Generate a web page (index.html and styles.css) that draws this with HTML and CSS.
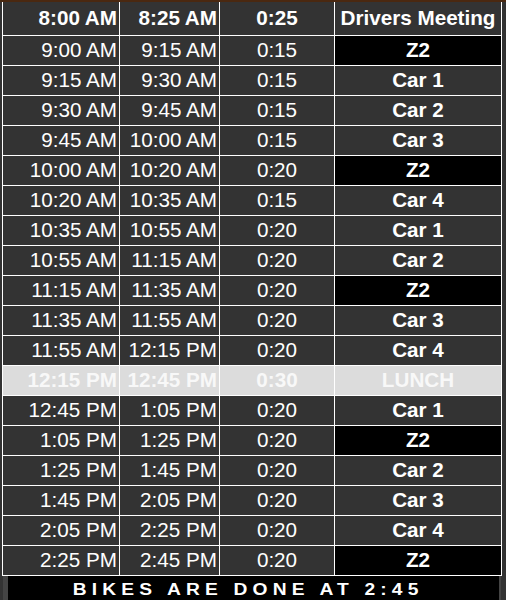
FILE: index.html
```html
<!DOCTYPE html>
<html>
<head>
<meta charset="utf-8">
<link rel="stylesheet" href="styles.css">
</head>
<body>
<div class="topbar"></div>
<div class="schedule">
  <div class="c t b">8:00 AM</div><div class="c t b">8:25 AM</div><div class="c d b">0:25</div><div class="c e">Drivers Meeting</div>
  <div class="c t">9:00 AM</div><div class="c t">9:15 AM</div><div class="c d">0:15</div><div class="c e z">Z2</div>
  <div class="c t">9:15 AM</div><div class="c t">9:30 AM</div><div class="c d">0:15</div><div class="c e">Car 1</div>
  <div class="c t">9:30 AM</div><div class="c t">9:45 AM</div><div class="c d">0:15</div><div class="c e">Car 2</div>
  <div class="c t">9:45 AM</div><div class="c t">10:00 AM</div><div class="c d">0:15</div><div class="c e">Car 3</div>
  <div class="c t">10:00 AM</div><div class="c t">10:20 AM</div><div class="c d">0:20</div><div class="c e z">Z2</div>
  <div class="c t">10:20 AM</div><div class="c t">10:35 AM</div><div class="c d">0:15</div><div class="c e">Car 4</div>
  <div class="c t">10:35 AM</div><div class="c t">10:55 AM</div><div class="c d">0:20</div><div class="c e">Car 1</div>
  <div class="c t">10:55 AM</div><div class="c t">11:15 AM</div><div class="c d">0:20</div><div class="c e">Car 2</div>
  <div class="c t">11:15 AM</div><div class="c t">11:35 AM</div><div class="c d">0:20</div><div class="c e z">Z2</div>
  <div class="c t">11:35 AM</div><div class="c t">11:55 AM</div><div class="c d">0:20</div><div class="c e">Car 3</div>
  <div class="c t">11:55 AM</div><div class="c t">12:15 PM</div><div class="c d">0:20</div><div class="c e">Car 4</div>
  <div class="c t b l">12:15 PM</div><div class="c t b l">12:45 PM</div><div class="c d b l">0:30</div><div class="c e l">LUNCH</div>
  <div class="c t">12:45 PM</div><div class="c t">1:05 PM</div><div class="c d">0:20</div><div class="c e">Car 1</div>
  <div class="c t">1:05 PM</div><div class="c t">1:25 PM</div><div class="c d">0:20</div><div class="c e z">Z2</div>
  <div class="c t">1:25 PM</div><div class="c t">1:45 PM</div><div class="c d">0:20</div><div class="c e">Car 2</div>
  <div class="c t">1:45 PM</div><div class="c t">2:05 PM</div><div class="c d">0:20</div><div class="c e">Car 3</div>
  <div class="c t">2:05 PM</div><div class="c t">2:25 PM</div><div class="c d">0:20</div><div class="c e">Car 4</div>
  <div class="c t">2:25 PM</div><div class="c t">2:45 PM</div><div class="c d">0:20</div><div class="c e z">Z2</div>
</div>
<div class="footer"><span class="footer-text">BIKES ARE DONE AT 2:45</span></div>
</body>
</html>
```
FILE: styles.css
```css
html, body {
  margin: 0;
  padding: 0;
  background: #333333;
  width: 506px;
  height: 600px;
  overflow: hidden;
}
body {
  font-family: "Liberation Sans", Arial, sans-serif;
  color: #ffffff;
}
.topbar {
  height: 2px;
  background: #4a2810;
}
.schedule {
  margin-left: 2px;
  width: 500px;
  box-sizing: border-box;
  display: grid;
  grid-template-columns: 116px 99px 114px 166px;
  grid-template-rows: 33px;
  grid-auto-rows: 29px;
  gap: 1px;
  background: #ffffff;
  border: 1px solid #ffffff;
  border-top: none;
}
.c {
  background: #333333;
  font-size: 20.67px;
  display: flex;
  align-items: center;
  white-space: nowrap;
  line-height: 1;
}
.t {
  justify-content: flex-end;
  padding-right: 2px;
}
.d {
  justify-content: center;
}
.e {
  justify-content: center;
  font-weight: bold;
}
.b {
  font-weight: bold;
}
.z {
  background: #000000;
}
.l {
  background: #dcdcdc;
  color: #f8f8f8;
}
.footer {
  margin-left: 3px;
  width: 498px;
  height: 30px;
  box-sizing: border-box;
  background: #000000;
  border-left: 5px solid #444444;
  border-right: 2px solid #444444;
  display: flex;
  justify-content: center;
  padding-top: 6px;
}
.footer-text {
  display: inline-block;
  font-family: "Liberation Sans", Arial, sans-serif;
  font-weight: bold;
  font-size: 16px;
  line-height: 1;
  letter-spacing: 4.3px;
  color: #ffffff;
  transform: scaleX(1.2);
  margin-right: 10px;
}
```
